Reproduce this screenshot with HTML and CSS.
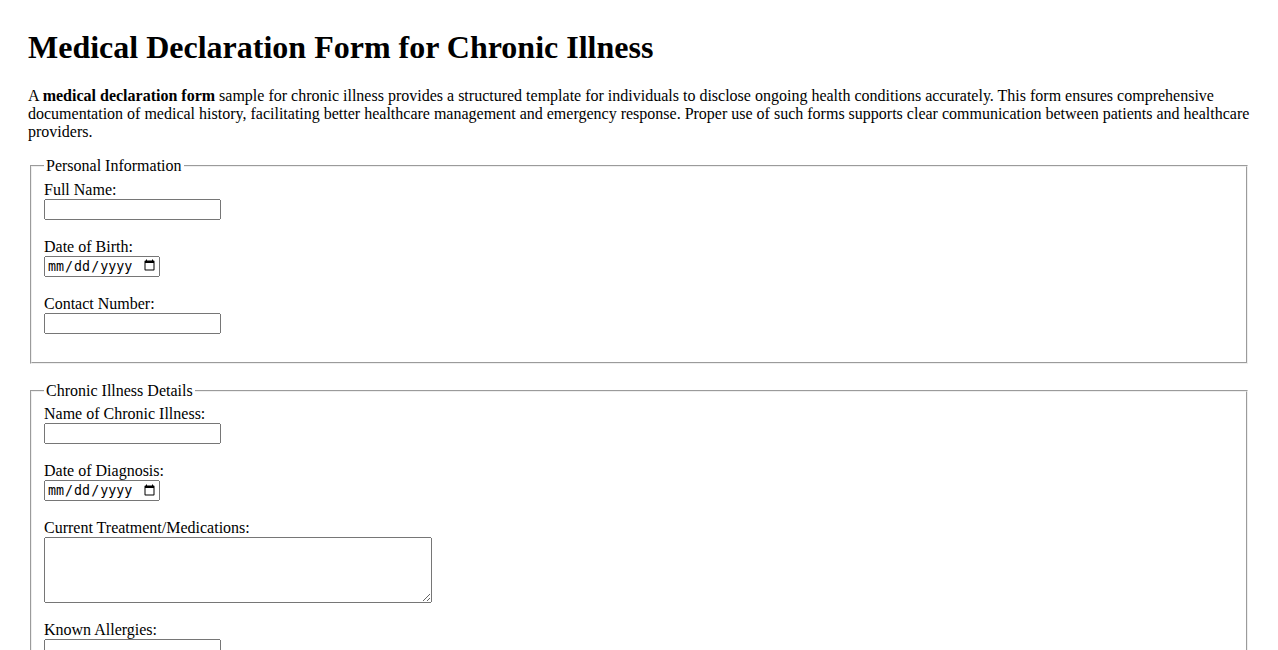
FILE: index.html
```html
<!DOCTYPE html>
<html lang="en">
<head>
<meta charset="utf-8">
<title>Medical Declaration Form for Chronic Illness</title>
<link rel="stylesheet" href="styles.css">
</head>
<body>
<h1 class="title">Medical Declaration Form for Chronic Illness</h1>
<p class="intro">A <strong>medical declaration form</strong> sample for chronic illness provides a structured template for individuals to disclose ongoing health conditions accurately. This form ensures comprehensive documentation of medical history, facilitating better healthcare management and emergency response. Proper use of such forms supports clear communication between patients and healthcare providers.</p>
<form class="form">
<fieldset class="section">
<legend>Personal Information</legend>
<label for="name">Full Name:</label><br>
<input type="text" id="name" class="text"><br><br>
<label for="dob">Date of Birth:</label><br>
<input type="date" id="dob" class="date"><br><br>
<label for="phone">Contact Number:</label><br>
<input type="tel" id="phone" class="text"><br><br>
</fieldset>
<br>
<fieldset class="section">
<legend>Chronic Illness Details</legend>
<label for="illness">Name of Chronic Illness:</label><br>
<input type="text" id="illness" class="text"><br><br>
<label for="diag">Date of Diagnosis:</label><br>
<input type="date" id="diag" class="date"><br><br>
<label for="meds">Current Treatment/Medications:</label><br>
<textarea id="meds" class="area" rows="4" cols="50"></textarea><br><br>
<label for="allergy">Known Allergies:</label><br>
<input type="text" id="allergy" class="text"><br><br>
</fieldset>
</form>
</body>
</html>
```
FILE: styles.css
```css
body {
  margin: 0;
  padding: 8px 28px;
  font-family: "Liberation Serif", "Times New Roman", serif;
  font-size: 16px;
  color: #000;
  background: #fff;
}
.title {
  font-size: 32px;
  margin: 21px 0;
}
.intro {
  margin: 16px 0;
}
.text {
  box-sizing: border-box;
  width: 177px;
  height: 21px;
}
.date {
  box-sizing: border-box;
  width: 116px;
  height: 21px;
}
.area {
  box-sizing: border-box;
  width: 388px;
  height: 66px;
  vertical-align: bottom;
}
```
